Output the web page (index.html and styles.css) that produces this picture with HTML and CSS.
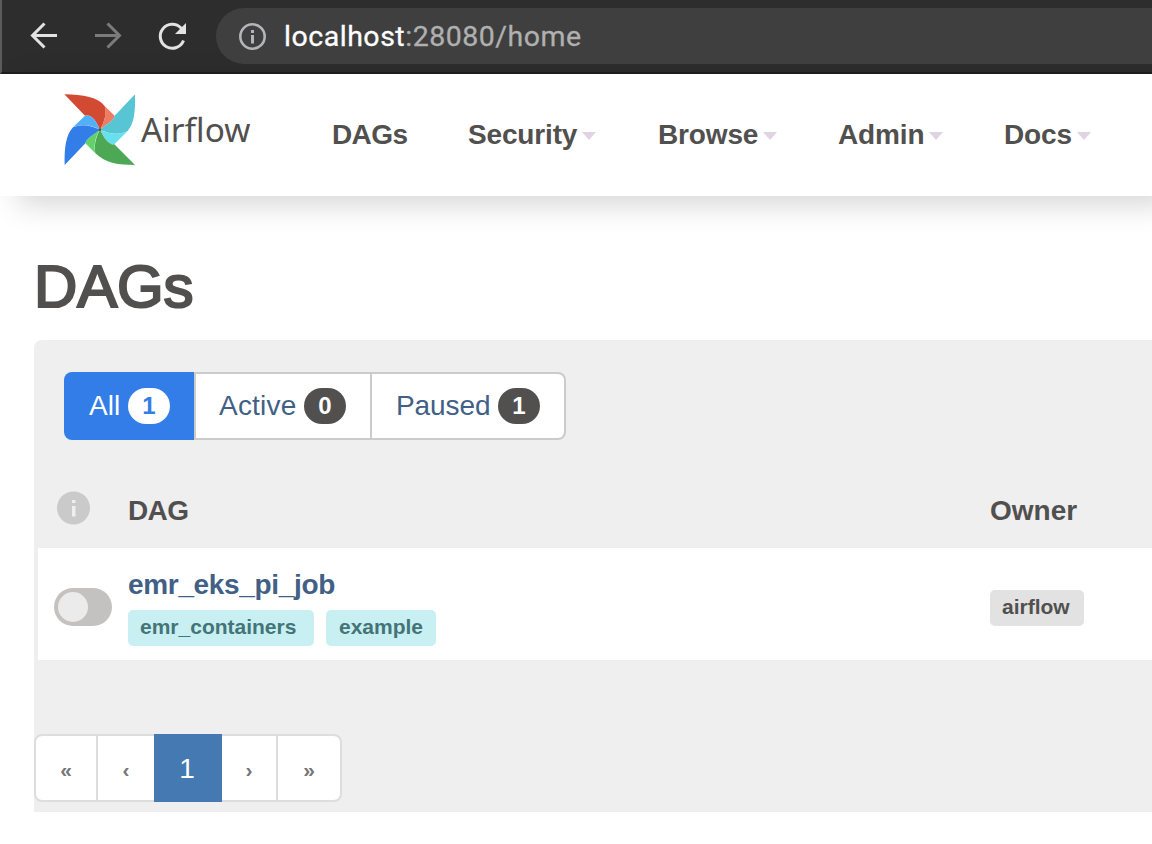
FILE: index.html
```html
<!DOCTYPE html>
<html lang="en">
<head>
<meta charset="utf-8">
<title>DAGs - Airflow</title>
<link rel="stylesheet" href="styles.css">
</head>
<body>
<div class="browser">
  <svg class="browser-icons" width="214" height="72" viewBox="0 0 214 72" fill="none" stroke-width="3">
    <path d="M57 35.500H33M44.500 23.500L32.500 35.500L44.500 47.500" stroke="#e2e2e2"/>
    <path d="M95 35.500H119M107.500 23.500L119.500 35.500L107.500 47.500" stroke="#7b7b7b"/>
    <path d="M183.500 40.500A12 12 0 1 1 181 28L183 30.500" stroke="#e2e2e2"/>
    <path d="M186 23V34H175Z" fill="#e2e2e2"/>
  </svg>
  <div class="address">
    <svg width="28" height="28" viewBox="0 0 28 28" fill="none" stroke="#b2b6bb">
      <circle cx="14.500" cy="14.500" r="12.200" stroke-width="2.600"/>
      <path d="M14.500 8V11M14.500 13V21.500" stroke-width="3"/>
    </svg>
    <span class="url"><span class="host">localhost</span>:28080/home</span>
  </div>
</div>
<header class="navbar">
  <a class="brand">
    <svg width="80" height="80" viewBox="0 0 240 240">
      <path fill="#d24a32" d="M13 13C70 14 115 22 134 48C140 67 136 93 120 119C108 92 95 72 75 77Z"/>
      <path fill="#ee7c62" d="M134 48L164 77C160 94 142 99 120 119C137 91 138 65 134 48Z"/>
      <path fill="#57c5d3" d="M225 13C226 65 223 100 203 123C175 138 145 130 120 119C142 99 160 94 164 77Z"/>
      <path fill="#68dfed" d="M203 123L163 163C146 165 136 148 120 119C150 134 178 135 203 123Z"/>
      <path fill="#4ca855" d="M225 225C175 224 140 222 106 190C102 165 107 142 120 119C134 146 146 165 163 163Z"/>
      <path fill="#61d168" d="M106 190L76 160C80 143 98 137 120 119C105 142 101 165 106 190Z"/>
      <path fill="#327de7" d="M14 225C13 175 17 135 39 112C65 101 90 105 120 119C98 137 80 143 76 160Z"/>
      <path fill="#52b0fb" d="M39 112L75 77C95 72 108 92 120 119C95 104 65 101 39 112Z"/>
      <circle cx="120" cy="119" r="4" fill="#51504f"/>
    </svg>
    <span class="brand-name">Airflow</span>
  </a>
  <nav class="menu">
    <a class="tight">DAGs</a>
    <a>Security<i class="caret"></i></a>
    <a>Browse<i class="caret"></i></a>
    <a>Admin<i class="caret"></i></a>
    <a>Docs<i class="caret"></i></a>
  </nav>
</header>
<main>
  <h1>DAGs</h1>
  <section class="panel">
    <div class="filters">
      <a class="filter selected">All<b class="badge">1</b></a>
      <a class="filter active">Active<b class="badge">0</b></a>
      <a class="filter paused">Paused<b class="badge">1</b></a>
    </div>
    <div class="table-head">
      <svg width="34" height="34" viewBox="0 0 34 34">
        <circle cx="17.500" cy="17" r="16.500" fill="#cacaca"/>
        <path d="M16 9H19.500V12H16ZM16 15H19.500V25.500H16Z" fill="#efefef"/>
      </svg>
      <span class="tight">DAG</span>
      <span>Owner</span>
    </div>
    <div class="table-row">
      <span class="toggle"></span>
      <div class="dag">
        <a class="dag-name">emr_eks_pi_job</a>
        <div class="tags"><span class="tag containers">emr_containers</span><span class="tag example">example</span></div>
      </div>
      <span class="tag owner">airflow</span>
    </div>
    <div class="pagination">
      <a class="first">«</a><a class="prev">‹</a><a class="current">1</a><a class="next">›</a><a class="last">»</a>
    </div>
  </section>
</main>
</body>
</html>
```
FILE: styles.css
```css
* { box-sizing: border-box; }
body {
  margin: 0;
  height: 844px;
  overflow: hidden;
  background: #fff;
  color: #51504f;
  font: 28px/40px "Liberation Sans", Arial, sans-serif;
}
.browser {
  display: flex;
  height: 74px;
  background: #2d2d2d;
  border-left: 2px solid #5c5c5c;
  border-bottom: 2px solid #1f1f1f;
}
.browser-icons { display: block; flex: none; margin-left: -2px; margin-right: 2px; }
.address {
  display: flex;
  flex: 1;
  align-items: center;
  height: 56px;
  margin-top: 8px;
  padding-left: 22px;
  border-radius: 28px 0 0 28px;
  background: #3f3f3f;
}
.url {
  margin-left: 18px;
  padding-top: 2px;
  color: #b0b0b0;
  font: 28.5px/40px Roboto, sans-serif;
  letter-spacing: .52px;
  -webkit-text-stroke: .3px;
  white-space: nowrap;
}
.host { color: #fff; }
.navbar {
  display: flex;
  height: 122px;
  background: #fff;
  box-shadow: 18px 8px 28px rgba(0, 0, 0, .17);
}
.brand { display: flex; flex: none; width: 332px; padding: 16px 0 0 60px; }
.brand-name {
  margin: 19px 0 0 1px;
  font: 33.3px/40px "Noto Sans", sans-serif;
}
.menu {
  display: grid;
  grid-template-columns: 136px 190px 180px 166px 148px;
  padding-top: 41px;
  font-weight: 700;
}
.menu a { display: flex; align-items: center; height: 40px; letter-spacing: -.15px; white-space: nowrap; }
.menu .tight, .table-head .tight { letter-spacing: -.6px; }
.caret {
  margin: 2px 0 0 5px;
  border: 7.5px solid transparent;
  border-top: 8px solid #e0d3e2;
  border-bottom: 0;
}
main { padding: 51px 0 0 34px; }
h1 {
  margin: 0;
  height: 93px;
  font-size: 60px;
  line-height: 80px;
  font-weight: 400;
  letter-spacing: -.2px;
  -webkit-text-stroke: 2.2px #51504f;
}
.panel {
  height: 472px;
  padding-top: 32px;
  border-radius: 8px 0 0;
  background: #efefef;
}
.filters { display: flex; width: 502px; height: 68px; margin-left: 30px; }
.filter {
  display: flex;
  align-items: center;
  justify-content: space-between;
  padding: 0 24px 0 25px;
  border: 2px solid #cbcbcb;
  border-left-width: 0;
  background: #fff;
  color: #425f85;
}
.filter.selected { width: 130px; border: 0; border-radius: 8px 0 0 8px; background: #327de7; color: #fff; }
.filter.active { width: 178px; border-left-width: 2px; padding-left: 23px; letter-spacing: .2px; }
.filter.paused { width: 194px; padding-left: 24px; border-radius: 0 8px 8px 0; letter-spacing: -.1px; }
.badge {
  width: 42px;
  height: 36px;
  border-radius: 18px;
  background: #51504f;
  color: #fff;
  font-size: 24px;
  line-height: 36px;
  text-align: center;
  letter-spacing: 0;
}
.selected .badge { background: #fff; color: #327de7; }
.table-head, .table-row {
  display: grid;
  grid-template-columns: 74px 862px auto;
  margin-left: 4px;
}
.table-head { height: 108px; padding: 51px 0 0 16px; font-weight: 700; }
.table-head svg { margin: 0 0 0 2px; }
.table-row { height: 112px; padding-left: 16px; background: #fff; }
.toggle {
  width: 58px;
  height: 38px;
  margin-top: 40px;
  padding: 4px;
  border-radius: 19px;
  background: #c4c2c1;
}
.toggle::before { content: ""; display: block; width: 30px; height: 30px; border-radius: 50%; background: #ebebeb; }
.dag { padding-top: 17px; }
.dag-name { display: block; height: 45px; color: #425f85; font-weight: 700; letter-spacing: -.33px; }
.tags { display: flex; gap: 12px; }
.tag {
  height: 36px;
  padding-left: 12px;
  border-radius: 5px;
  font-size: 21px;
  font-weight: 700;
  line-height: 34px;
}
.containers { width: 186px; }
.example { width: 110px; padding-left: 13px; }
.containers, .example { background: #c8f0f2; color: #447478; }
.owner { width: 94px; margin-top: 42px; background: #e2e2e2; }
.pagination { display: flex; width: 308px; height: 68px; margin-top: 74px; line-height: 65px; text-align: center; }
.pagination a {
  border: 2px solid #ddd;
  border-left-width: 0;
  background: #fff;
  color: #777;
}
.pagination .first { width: 64px; border-left-width: 2px; border-radius: 8px 0 0 8px; }
.pagination .prev { width: 56px; border-right: 0; }
.pagination .current { width: 68px; border-color: #4579b2; background: #4579b2; color: #fff; }
.pagination .next { width: 56px; }
.pagination .last { width: 64px; border-radius: 0 8px 8px 0; }
.pagination a:not(.current) { font-size: 21px; font-weight: 700; line-height: 67px; }
```
